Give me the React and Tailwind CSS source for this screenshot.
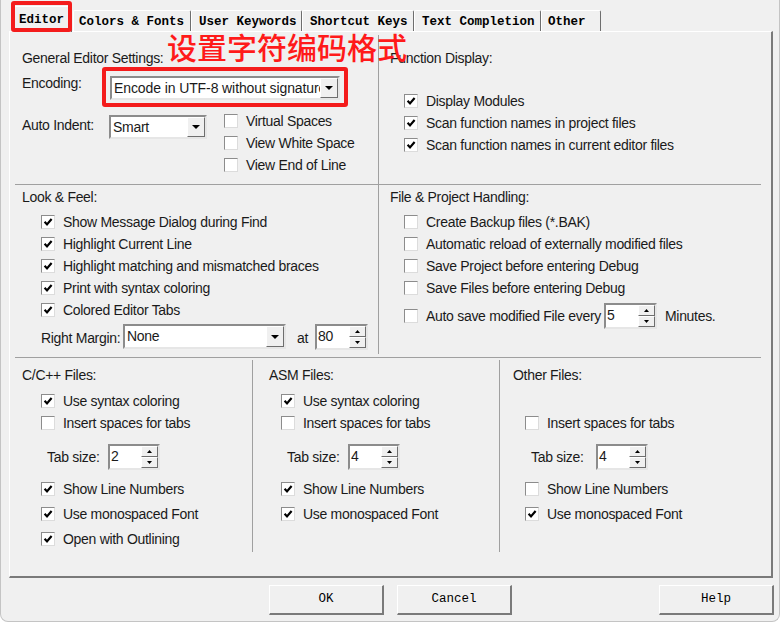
import React from "react";

const Check = ({ checked }) => (
  <span className="w-[14px] h-[14px] shrink-0 bg-white border border-t-[#8c8c8c] border-l-[#8c8c8c] border-r-[#dcdcdc] border-b-[#dcdcdc] flex items-center justify-center">
    {checked && (
      <svg width="10" height="10" viewBox="0 0 10 10">
        <path d="M1.6 4.8 L4 7.4 L8.6 2" stroke="#000" strokeWidth="2.2" fill="none" />
      </svg>
    )}
  </span>
);

const Row = ({ checked, label, tall }) => (
  <div className={tall ? "flex items-center gap-[8px] h-[25px]" : "flex items-center gap-[8px] h-[22px]"}>
    <Check checked={checked} />
    <span className="leading-[16px] whitespace-nowrap">{label}</span>
  </div>
);

const Arrow = () => (
  <span className="w-[18px] h-full shrink-0 bg-[#f0f0f0] border border-t-white border-l-white border-r-[#6e6e6e] border-b-[#6e6e6e] flex items-center justify-center">
    <svg width="8" height="4" viewBox="0 0 8 4">
      <polygon points="0,0 8,0 4,4" fill="#000" />
    </svg>
  </span>
);

const Combo = ({ value, className }) => (
  <div className={`bg-white border-2 border-t-[#8c8c8c] border-l-[#8c8c8c] border-r-[#e6e6e6] border-b-[#e6e6e6] flex items-stretch ${className}`}>
    <span className="flex-1 pl-[2px] overflow-hidden whitespace-nowrap leading-[20px]">{value}</span>
    <Arrow />
  </div>
);

const Spin = ({ value, className }) => (
  <div className={`h-[26px] bg-white border-2 border-t-[#8c8c8c] border-l-[#8c8c8c] border-r-[#e6e6e6] border-b-[#e6e6e6] flex ${className}`}>
    <span className="flex-1 pl-[1px] leading-[20px]">{value}</span>
    <div className="w-[17px] flex flex-col">
      <span className="flex-1 bg-[#f0f0f0] border border-t-white border-l-white border-r-[#6e6e6e] border-b-[#6e6e6e] flex items-center justify-center">
        <svg width="5" height="3" viewBox="0 0 5 3">
          <polygon points="0,3 5,3 2.5,0" fill="#000" />
        </svg>
      </span>
      <span className="flex-1 bg-[#f0f0f0] border border-t-white border-l-white border-r-[#6e6e6e] border-b-[#6e6e6e] flex items-center justify-center">
        <svg width="5" height="3" viewBox="0 0 5 3">
          <polygon points="0,0 5,0 2.5,3" fill="#000" />
        </svg>
      </span>
    </div>
  </div>
);

const Tab = ({ label, className }) => (
  <div className={`h-[21px] pt-[4px] pl-[5px] bg-[#f0f0f0] border-t border-l border-t-white border-l-white border-r border-r-[#6e6e6e] rounded-t-[2px] leading-[14px] whitespace-nowrap ${className}`}>
    {label}
  </div>
);

const Btn = ({ label, className }) => (
  <button
    type="button"
    className={`w-[115px] h-[30px] bg-[#f0f0f0] border-t border-l border-t-white border-l-white border-r-2 border-b-2 border-r-[#7a7a7a] border-b-[#7a7a7a] font-['Liberation_Mono',monospace] tracking-normal text-[12.5px] text-black ${className}`}
  >
    {label}
  </button>
);

const FileCol = ({ title, rows, tab, className, cbPad, tabPad, labelW }) => (
  <div className={`pt-[9px] ${className}`}>
    <div className="h-[16px] leading-[16px]">{title}</div>
    <div className={`mt-[7px] ${cbPad}`}>
      {rows[0] ? <Row checked={rows[0][0]} label={rows[0][1]} /> : <div className="h-[22px]" />}
      <Row checked={rows[1][0]} label={rows[1][1]} />
    </div>
    <div className={`mt-[10px] flex items-center h-[26px] ${tabPad}`}>
      <span className={labelW}>Tab size:</span>
      <Spin value={tab} className="w-[52px]" />
    </div>
    <div className={`mt-[6px] ${cbPad}`}>
      {rows.slice(2).map((r) => (
        <Row key={r[1]} checked={r[0]} label={r[1]} tall />
      ))}
    </div>
  </div>
);

export default function App() {
  return (
    <div className="relative w-[780px] h-[622px] overflow-hidden bg-[#f0f0f0] border-x border-b border-[#c4c4c4] rounded-b-[8px] font-['Liberation_Sans',sans-serif] text-[14px] tracking-[-0.3px] text-[#1a1a1a]">
      {/* tab strip */}
      <div className="h-[31px] flex items-end pl-[13px] font-['Liberation_Mono',monospace] tracking-normal text-[12.5px] font-bold text-black">
        <div className="relative z-10 w-[58px] h-[26px] -mb-[1px] pt-[6px] pl-[4px] bg-[#f0f0f0] border-t border-l border-t-white border-l-white border-r border-r-[#6e6e6e] rounded-t-[2px] leading-[14px]">
          Editor
        </div>
        <Tab label="Colors & Fonts" className="w-[118px] ml-[1px]" />
        <Tab label="User Keywords" className="w-[111px] pl-[7px]" />
        <Tab label="Shortcut Keys" className="w-[112px] pl-[7px]" />
        <Tab label="Text Completion" className="w-[127px] pl-[7px]" />
        <Tab label="Other" className="w-[60px] pl-[6px]" />
      </div>

      {/* panel */}
      <div className="ml-[8px] w-[764px] h-[547px] border-t border-l border-white border-r-2 border-b-2 border-r-[#7a7a7a] border-b-[#7a7a7a] flex flex-col">
        <div className="h-[325px] flex">
          <div className="w-[368px] flex flex-col">
            <div className="h-[152px] pl-[12px] pt-[18px]">
              <div className="h-[16px] leading-[16px]">General Editor Settings:</div>
              <div className="flex items-start mt-[1px]">
                <span className="w-[80px] mt-[8px] leading-[16px]">Encoding:</span>
                <div className="w-[246px] h-[40px] border-4 border-[#f41c1c] rounded-[3px] pl-[4px] pt-[5px]">
                  <Combo value="Encode in UTF-8 without signature" className="w-[230px] h-[24px] tracking-[-0.1px]" />
                </div>
              </div>
              <div className="flex items-start mt-[3px]">
                <span className="w-[87px] mt-[7px] leading-[16px]">Auto Indent:</span>
                <Combo value="Smart" className="w-[98px] h-[24px] mt-[5px]" />
                <div className="ml-[17px]">
                  <Row label="Virtual Spaces" />
                  <Row label="View White Space" />
                  <Row label="View End of Line" />
                </div>
              </div>
            </div>
            <div className="h-px bg-[#a0a0a0] ml-[5px]" />
            <div className="flex-1 pl-[12px] pt-[4px]">
              <div className="h-[16px] leading-[16px]">Look &amp; Feel:</div>
              <div className="mt-[6px] pl-[19px]">
                <Row checked label="Show Message Dialog during Find" />
                <Row checked label="Highlight Current Line" />
                <Row checked label="Highlight matching and mismatched braces" />
                <Row checked label="Print with syntax coloring" />
                <Row checked label="Colored Editor Tabs" />
                <div className="flex items-start mt-[3px]">
                  <span className="w-[82px] mt-[6px] leading-[16px] whitespace-nowrap">Right Margin:</span>
                  <Combo value="None" className="w-[163px] h-[25px]" />
                  <span className="w-[18px] ml-[11px] mt-[6px] leading-[16px]">at</span>
                  <Spin value="80" className="w-[53px]" />
                </div>
              </div>
            </div>
          </div>

          <div className="w-px bg-[#a0a0a0] my-[3px]" />

          <div className="flex-1 flex flex-col">
            <div className="h-[152px] pl-[11px] pt-[18px]">
              <div className="h-[16px] leading-[16px]">Function Display:</div>
              <div className="mt-[24px] pl-[14px]">
                <Row checked label="Display Modules" />
                <Row checked label="Scan function names in project files" />
                <Row checked label="Scan function names in current editor files" />
              </div>
            </div>
            <div className="h-px bg-[#a0a0a0] mr-[10px]" />
            <div className="flex-1 pl-[11px] pt-[4px]">
              <div className="h-[16px] leading-[16px]">File &amp; Project Handling:</div>
              <div className="mt-[6px] pl-[14px]">
                <Row label="Create Backup files (*.BAK)" />
                <Row label="Automatic reload of externally modified files" />
                <Row label="Save Project before entering Debug" />
                <Row label="Save Files before entering Debug" />
                <div className="mt-[4px] h-[26px] flex items-center">
                  <Check />
                  <span className="ml-[8px] leading-[16px] whitespace-nowrap">Auto save modified File every</span>
                  <Spin value="5" className="w-[53px] ml-[3px]" />
                  <span className="ml-[8px] leading-[16px]">Minutes.</span>
                </div>
              </div>
            </div>
          </div>
        </div>

        <div className="h-px bg-[#a0a0a0] ml-[5px] mr-[10px]" />

        <div className="flex-1 flex">
          <FileCol
            title="C/C++ Files:"
            className="w-[242px] pl-[12px]"
            cbPad="pl-[19px]"
            tabPad="pl-[25px]"
            labelW="w-[61px]"
            tab="2"
            rows={[
              [true, "Use syntax coloring"],
              [false, "Insert spaces for tabs"],
              [true, "Show Line Numbers"],
              [true, "Use monospaced Font"],
              [true, "Open with Outlining"],
            ]}
          />
          <div className="w-px h-[192px] mt-[2px] bg-[#a0a0a0]" />
          <FileCol
            title="ASM Files:"
            className="w-[246px] pl-[16px]"
            cbPad="pl-[12px]"
            tabPad="pl-[18px]"
            labelW="w-[61px]"
            tab="4"
            rows={[
              [true, "Use syntax coloring"],
              [false, "Insert spaces for tabs"],
              [true, "Show Line Numbers"],
              [true, "Use monospaced Font"],
            ]}
          />
          <div className="w-px h-[192px] mt-[2px] bg-[#a0a0a0]" />
          <FileCol
            title="Other Files:"
            className="flex-1 pl-[13px]"
            cbPad="pl-[12px]"
            tabPad="pl-[18px]"
            labelW="w-[65px]"
            tab="4"
            rows={[
              null,
              [false, "Insert spaces for tabs"],
              [false, "Show Line Numbers"],
              [true, "Use monospaced Font"],
            ]}
          />
        </div>
      </div>

      {/* buttons */}
      <div className="mt-[7px] pl-[268px] flex">
        <Btn label="OK" />
        <Btn label="Cancel" className="ml-[13px]" />
        <Btn label="Help" className="ml-[147px]" />
      </div>

      {/* annotations */}
      <div className="absolute left-[10px] top-[1px] w-[61px] h-[31px] border-4 border-[#f41c1c] rounded-[3px] z-20" />
      <div className="absolute left-[166px] top-[28px] z-20 text-[30px] leading-[36px] tracking-normal font-medium text-[#ff1a1a] font-['Noto_Sans_CJK_SC',sans-serif] whitespace-nowrap">
        设置字符编码格式
      </div>
    </div>
  );
}
